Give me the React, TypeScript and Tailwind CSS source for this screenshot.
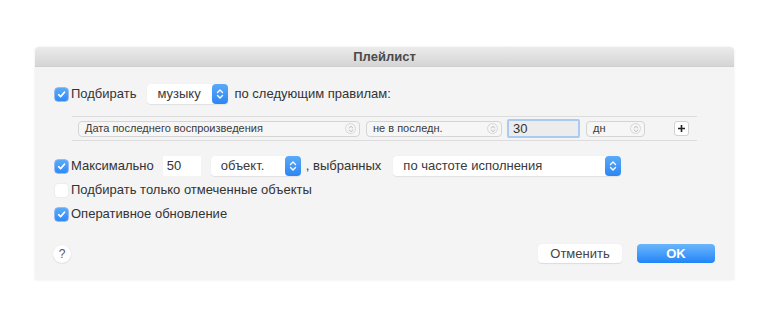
import React from "react";

const Check = ({ on }: { on: boolean }) =>
  on ? (
    <span className="flex h-[13px] w-[13px] items-center justify-center rounded-[3px] bg-gradient-to-b from-[#5aaaf8] to-[#2f8af5] shadow-[0_0_0_0.5px_#3b82f6]">
      <svg width="9" height="9" viewBox="0 0 10 10">
        <path d="M1.8 5.2 L4 7.4 L8.4 2.4" fill="none" stroke="white" strokeWidth="1.8" strokeLinecap="round" strokeLinejoin="round" />
      </svg>
    </span>
  ) : (
    <span className="h-[13px] w-[13px] rounded-[3px] bg-white shadow-[0_0_0_0.5px_#e4e4e4]" />
  );

const BlueStepper = () => (
  <span className="flex h-[20px] w-[16px] items-center justify-center rounded-[4px] bg-gradient-to-b from-[#5aaaf8] to-[#2b86f2]">
    <svg width="8" height="12" viewBox="0 0 8 12">
      <path d="M1.5 4.5 L4 2 L6.5 4.5 M1.5 7.5 L4 10 L6.5 7.5" fill="none" stroke="white" strokeWidth="1.4" strokeLinecap="round" strokeLinejoin="round" />
    </svg>
  </span>
);

const GrayStepper = () => (
  <span className="flex h-[11px] w-[11px] items-center justify-center rounded-full border border-[#d8d8d8] bg-[#f5f5f5]">
    <svg width="6" height="8" viewBox="0 0 6 8">
      <path d="M1.2 3 L3 1.3 L4.8 3 M1.2 5 L3 6.7 L4.8 5" fill="none" stroke="#b5b5b5" strokeWidth="0.9" strokeLinecap="round" strokeLinejoin="round" />
    </svg>
  </span>
);

const Popup = ({ label, w }: { label: string; w: string }) => (
  <span className={`flex h-[20px] items-center justify-between rounded-[4px] bg-white pl-[10px] shadow-[0_0.5px_1px_rgba(0,0,0,0.08)] ${w}`}>
    <span className="text-[13px] text-[#3a3a3a]">{label}</span>
    <BlueStepper />
  </span>
);

const SmallPopup = ({ label, w }: { label: string; w: string }) => (
  <span className={`flex h-[16px] items-center justify-between rounded-[4px] border border-[#d4d4d4] bg-[#f6f6f6] pl-[6px] pr-[3px] ${w}`}>
    <span className="text-[11px] text-[#3a3a3a]">{label}</span>
    <GrayStepper />
  </span>
);

export default function App() {
  return (
    <div className="min-h-[330px] w-[770px] bg-white pl-[35px] pt-[47px]" style={{ fontFamily: '"Liberation Sans", Arial, sans-serif' }}>
      <div className="flex h-[233px] w-[699px] flex-col overflow-hidden rounded-t-[4px] shadow-[0_0_3px_rgba(0,0,0,0.08)]">
        <div className="flex h-[20px] items-center justify-center bg-gradient-to-b from-[#ebebeb] to-[#d5d5d5] border-b border-[#cfcfcf]">
          <span className="text-[13px] font-bold text-[#4a4a4a]">Плейлист</span>
        </div>
        <div className="flex flex-1 flex-col bg-[#f4f4f4] pt-[17px]">
          {/* Row 1 */}
          <div className="flex h-[20px] items-center pl-[20px]">
            <Check on />
            <span className="ml-[3px] text-[13px] text-[#333]">Подбирать</span>
            <span className="ml-[11px]">
              <Popup label="музыку" w="w-[81px]" />
            </span>
            <span className="ml-[6px] text-[13px] text-[#333]">по следующим правилам:</span>
          </div>
          {/* Rule row */}
          <div className="ml-[37px] mt-[12px] flex h-[25px] w-[625px] items-center border-y border-[#dcdcdc] pl-[6px]">
            <SmallPopup label="Дата последнего воспроизведения" w="w-[282px]" />
            <span className="ml-[6px]">
              <SmallPopup label="не в последн." w="w-[136px]" />
            </span>
            <span className="ml-[5px] flex h-[19px] w-[73px] items-center rounded-[2px] border-2 border-[#a9cbf3] bg-[#ececec] pl-[4px] text-[13px] text-[#333]">
              30
            </span>
            <span className="ml-[6px]">
              <SmallPopup label="дн" w="w-[59px]" />
            </span>
            <span className="ml-[29px] flex h-[15px] w-[15px] items-center justify-center rounded-[3px] border border-[#d2d2d2] bg-white">
              <svg width="9" height="9" viewBox="0 0 9 9">
                <path d="M4.5 1 V8 M1 4.5 H8" stroke="#222" strokeWidth="1.6" />
              </svg>
            </span>
          </div>
          {/* Row 3 */}
          <div className="mt-[15px] flex h-[20px] items-center pl-[20px]">
            <Check on />
            <span className="ml-[3px] text-[13px] text-[#333]">Максимально</span>
            <span className="ml-[9px] flex h-[20px] w-[38px] items-center bg-white pl-[4px] text-[13px] text-[#333]">50</span>
            <span className="ml-[10px]">
              <Popup label="объект." w="w-[90px]" />
            </span>
            <span className="ml-[5px] text-[13px] text-[#333]">, выбранных</span>
            <span className="ml-[12px]">
              <Popup label="по частоте исполнения" w="w-[228px]" />
            </span>
          </div>
          {/* Row 4 */}
          <div className="mt-[4px] flex h-[20px] items-center pl-[20px]">
            <Check on={false} />
            <span className="ml-[3px] text-[13px] text-[#333]">Подбирать только отмеченные объекты</span>
          </div>
          {/* Row 5 */}
          <div className="mt-[4px] flex h-[20px] items-center pl-[20px]">
            <Check on />
            <span className="ml-[3px] text-[13px] text-[#333]">Оперативное обновление</span>
          </div>
          {/* Buttons */}
          <div className="mt-[20px] flex h-[19px] items-center pl-[18px] pr-[19px]">
            <span className="flex h-[18px] w-[18px] items-center justify-center rounded-full bg-white text-[12px] text-[#555] shadow-[0_0.5px_1.5px_rgba(0,0,0,0.15)]">
              ?
            </span>
            <span className="ml-auto flex h-[19px] w-[84px] items-center justify-center rounded-[4px] bg-white text-[13px] text-[#444] shadow-[0_0.5px_1px_rgba(0,0,0,0.1)]">
              Отменить
            </span>
            <span className="ml-[15px] flex h-[19px] w-[78px] items-center justify-center rounded-[4px] bg-gradient-to-b from-[#6ab6fb] to-[#1e84f8] text-[13px] font-bold text-white">
              OK
            </span>
          </div>
        </div>
      </div>
    </div>
  );
}
